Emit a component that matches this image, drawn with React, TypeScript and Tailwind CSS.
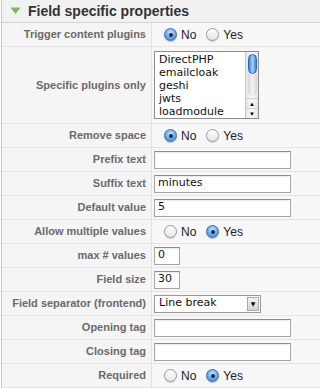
import React from "react";

type Row = { label: string; kind: "radio" | "list" | "text" | "small" | "select"; value?: string; yes?: boolean };

const rows: Row[] = [
  { label: "Trigger content plugins", kind: "radio", yes: false },
  { label: "Specific plugins only", kind: "list" },
  { label: "Remove space", kind: "radio", yes: false },
  { label: "Prefix text", kind: "text", value: "" },
  { label: "Suffix text", kind: "text", value: "minutes" },
  { label: "Default value", kind: "text", value: "5" },
  { label: "Allow multiple values", kind: "radio", yes: true },
  { label: "max # values", kind: "small", value: "0" },
  { label: "Field size", kind: "small", value: "30" },
  { label: "Field separator (frontend)", kind: "select", value: "Line break" },
  { label: "Opening tag", kind: "text", value: "" },
  { label: "Closing tag", kind: "text", value: "" },
  { label: "Required", kind: "radio", yes: true },
];

const plugins = ["DirectPHP", "emailcloak", "geshi", "jwts", "loadmodule"];

function Radio({ on }: { on: boolean }) {
  if (on) {
    return (
      <span className="flex h-[13px] w-[13px] shrink-0 items-center justify-center rounded-full border border-[#3b6fb6] bg-[radial-gradient(circle_at_50%_35%,#cfe6ff,#6aa7ec_55%,#2f74d0)] shadow-[0_1px_1px_rgba(0,0,0,0.25)]">
        <span className="block h-[4px] w-[4px] rounded-full bg-[#1b2a44]" />
      </span>
    );
  }
  return (
    <span className="block h-[13px] w-[13px] shrink-0 rounded-full border border-[#9a9a9a] bg-[linear-gradient(#ffffff,#e4e4e4)] shadow-[0_1px_1px_rgba(0,0,0,0.15)]" />
  );
}

function RadioPair({ yes }: { yes?: boolean }) {
  return (
    <div className="flex items-center pl-[10px] text-[12px] text-[#222] [font-family:'Liberation_Sans',Arial,sans-serif]">
      <Radio on={!yes} />
      <span className="ml-[4px]">No</span>
      <span className="ml-[10px] flex">
        <Radio on={!!yes} />
      </span>
      <span className="ml-[4px]">Yes</span>
    </div>
  );
}

function TextBox({ value, w }: { value?: string; w: string }) {
  return (
    <div
      className={`${w} flex h-[18px] items-center border border-[#a5a5a5] border-t-[#8c8c8c] bg-white pl-[3px] text-[11px] text-[#111] shadow-[inset_0_1px_1px_rgba(0,0,0,0.08)] [font-family:'DejaVu_Sans',sans-serif]`}
    >
      {value}
    </div>
  );
}

function ListBox() {
  return (
    <div className="flex h-[68px] w-[105px] border border-[#8c8c8c] bg-white">
      <div className="flex-1 overflow-hidden pl-[4px] pt-px text-[11px] leading-[13px] text-[#111] [font-family:'DejaVu_Sans',sans-serif]">
        {plugins.map((p) => (
          <div key={p}>{p}</div>
        ))}
      </div>
      <div className="flex w-[13px] flex-col border-l border-[#c8c8c8] bg-[linear-gradient(90deg,#e6e6e6,#fafafa,#e6e6e6)]">
        <div className="mx-auto mt-[2px] h-[20px] w-[9px] rounded-full border border-[#2f66b8] bg-[linear-gradient(90deg,#3d7fd8,#a9d0fb,#3d7fd8)]" />
        <div className="mx-auto h-[22px] w-[9px] rounded-b-full bg-[linear-gradient(90deg,#d6d6d6,#f2f2f2,#d6d6d6)]" />
        <div className="flex-1" />
        <div className="flex h-[10px] items-center justify-center border-t border-[#d0d0d0] text-[6px] leading-none text-black">▲</div>
        <div className="flex h-[10px] items-center justify-center border-t border-[#d0d0d0] text-[6px] leading-none text-black">▼</div>
      </div>
    </div>
  );
}

function SelectBox({ value }: { value?: string }) {
  return (
    <div className="flex h-[18px] w-[107px] items-center border border-[#9a9a9a] bg-white text-[11px] text-[#111] [font-family:'DejaVu_Sans',sans-serif]">
      <span className="flex-1 pl-[4px]">{value}</span>
      <span className="mr-[1px] flex h-[14px] w-[12px] items-center justify-center border border-[#aaa] bg-[linear-gradient(#f4f4f4,#d2d2d2)] text-[6px] leading-none">▼</span>
    </div>
  );
}

export default function App() {
  return (
    <div className="h-[388px] w-[320px] overflow-hidden bg-white">
      <div className="ml-px min-h-[388px] border-l border-[#c8c8c8] bg-[#f7f7f7]">
        {/* Pane header */}
        <div className="flex h-[23px] items-center border-b border-[#d6d6d6] bg-[#f1f1f1] pl-[8px] [font-family:'Liberation_Sans',Arial,sans-serif]">
          <svg width="11" height="8" viewBox="0 0 11 8" className="mr-[7px]">
            <polygon points="0.5,0.5 10.5,0.5 5.5,7" fill="#6fbf5a" />
          </svg>
          <span className="text-[14px] font-bold text-[#333]">Field specific properties</span>
        </div>

        {rows.map((r) => (
          <div
            key={r.label}
            className={`grid grid-cols-[150px_1fr] border-b border-[#e4e4e4] ${r.kind === "list" ? "h-[77px]" : "h-[24px]"}`}
          >
            <div className="flex items-center justify-end border-r border-[#e2e2e2] bg-[#f5f5f5] pr-[5px] text-[11px] font-bold text-[#6a6a6a] [font-family:'Liberation_Sans',Arial,sans-serif]">
              {r.label}
            </div>
            <div className="flex items-center pl-[2px]">
              {r.kind === "radio" && <RadioPair yes={r.yes} />}
              {r.kind === "list" && <ListBox />}
              {r.kind === "text" && <TextBox value={r.value} w="w-[137px]" />}
              {r.kind === "small" && <TextBox value={r.value} w="w-[26px]" />}
              {r.kind === "select" && <SelectBox value={r.value} />}
            </div>
          </div>
        ))}
      </div>
    </div>
  );
}
